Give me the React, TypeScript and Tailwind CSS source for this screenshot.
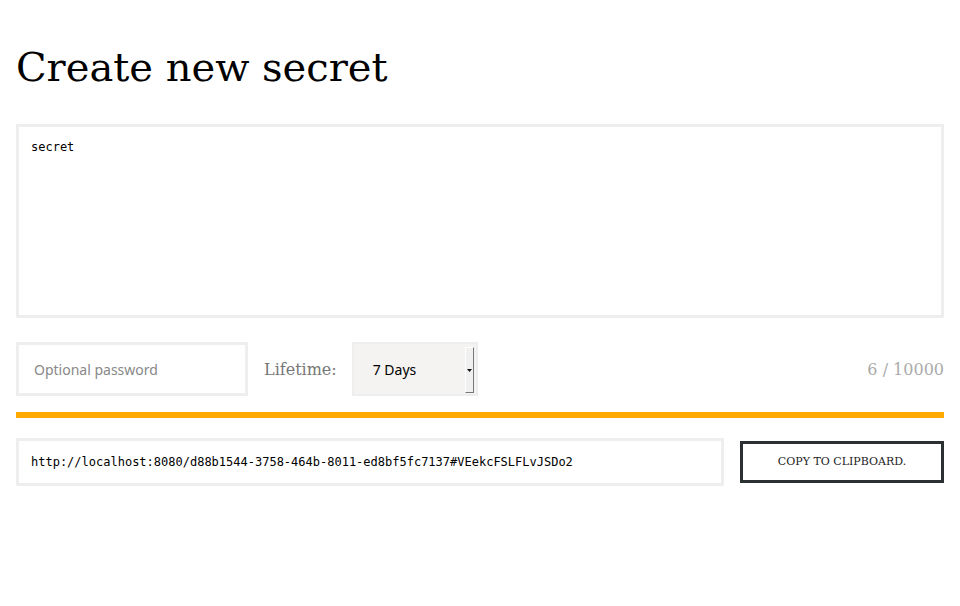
import { useState } from "react";

const serif = "font-['DejaVu_Serif',serif]";

export default function App() {
  const [secret, setSecret] = useState("secret");
  const [password, setPassword] = useState("");
  const url =
    "http://localhost:8080/d88b1544-3758-464b-8011-ed8bf5fc7137#VEekcFSLFLvJSDo2";

  return (
    <div className="min-h-screen bg-white px-4 pt-[43px]">
      <h1 className={`${serif} text-[40px] leading-[48px] text-black`}>
        Create new secret
      </h1>

      {/* Secret */}
      <textarea
        value={secret}
        onChange={(e) => setSecret(e.target.value)}
        className="mt-[33px] block h-[194px] w-full resize-none border-[3px] border-[#eeeeee] bg-white px-3 py-3 font-['DejaVu_Sans_Mono',monospace] text-[12px] leading-[16px] text-black outline-none"
      />

      {/* Options */}
      <div className="mt-6 flex items-center">
        <input
          value={password}
          onChange={(e) => setPassword(e.target.value)}
          placeholder="Optional password"
          className="h-[54px] w-[232px] border-[3px] border-[#eeeeee] bg-white px-[15px] font-['Noto_Sans',sans-serif] text-[14px] text-black outline-none placeholder:text-[#888888]"
        />
        <span className={`${serif} ml-4 pt-[2px] text-[16px] text-[#777777]`}>
          Lifetime:
        </span>
        <div className="relative ml-[15px] flex h-[54px] w-[126px] items-center border-[2px] border-[#eeeeee] bg-[#f4f3f1]">
          <span className="pl-[19px] font-['Noto_Sans',sans-serif] text-[14px] text-black">
            7 Days
          </span>
          <div className="absolute right-[2px] top-[3px] flex h-[46px] w-[9px] items-center justify-center border border-t-[#ffffff] border-l-[#ffffff] border-r-[#777777] border-b-[#777777] bg-[#f0f0f0]">
            <svg width="5" height="3" viewBox="0 0 5 3">
              <path d="M0 0h5L2.5 3z" fill="#111" />
            </svg>
          </div>
        </div>
        <span className={`${serif} ml-auto pt-[2px] text-[16px] text-[#aaaaaa]`}>
          6 / 10000
        </span>
      </div>

      <div className="mt-4 h-[6px] w-full bg-[#ffaa00]" />

      {/* Result */}
      <div className="mt-5 flex items-center gap-4">
        <input
          readOnly
          value={url}
          className="h-[48px] w-[708px] border-[3px] border-[#eeeeee] bg-white px-3 font-['DejaVu_Sans_Mono',monospace] text-[12px] text-black outline-none"
        />
        <button
          className={`${serif} h-[42px] flex-1 border-[3px] border-[#2b3033] bg-white text-[11px] text-[#222222]`}
        >
          COPY TO CLIPBOARD.
        </button>
      </div>
    </div>
  );
}
